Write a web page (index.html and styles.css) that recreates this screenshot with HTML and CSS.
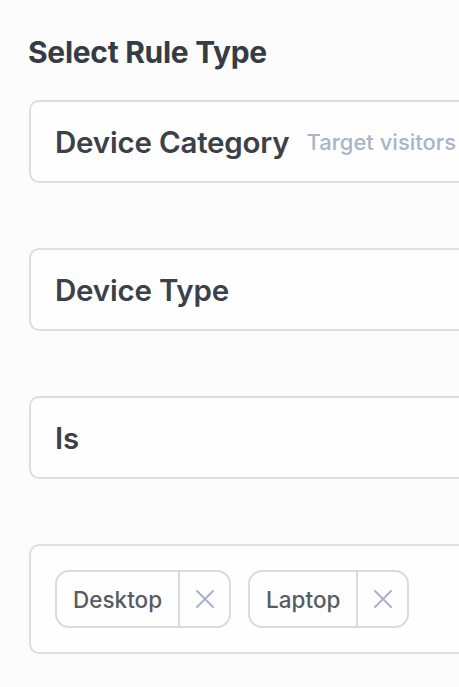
FILE: index.html
```html
<!DOCTYPE html>
<html>
<head>
<meta charset="utf-8">
<link rel="stylesheet" href="styles.css">
</head>
<body>
<div class="page">
  <h1 class="title">Select Rule Type</h1>
  <div class="field">
    <span class="label">Device Category</span>
    <span class="hint">Target visitors by device</span>
  </div>
  <div class="field">
    <span class="label">Device Type</span>
  </div>
  <div class="field">
    <span class="label">Is</span>
  </div>
  <div class="field tags">
    <div class="chip">
      <span class="chip-text">Desktop</span>
      <span class="chip-x"><svg viewBox="0 0 20 20" width="20" height="20"><path d="M2 2 L18 18 M18 2 L2 18" stroke="currentColor" stroke-width="2" fill="none" stroke-linecap="round"/></svg></span>
    </div>
    <div class="chip">
      <span class="chip-text">Laptop</span>
      <span class="chip-x"><svg viewBox="0 0 20 20" width="20" height="20"><path d="M2 2 L18 18 M18 2 L2 18" stroke="currentColor" stroke-width="2" fill="none" stroke-linecap="round"/></svg></span>
    </div>
  </div>
</div>
</body>
</html>
```
FILE: styles.css
```css
html, body {
  margin: 0;
  padding: 0;
  background: #fcfcfc;
  overflow: hidden;
}
body {
  font-family: Inter, "Noto Sans", "Liberation Sans", sans-serif;
  color: #3b4148;
}
.page {
  width: 600px;
  padding: 34px 0 0 28px;
  display: flex;
  flex-direction: column;
  gap: 65px;
}
.title {
  margin: 0 0 -35px 0;
  font-size: 30px;
  font-weight: 700;
  line-height: 36px;
  letter-spacing: -0.3px;
  color: #363c43;
}
.field {
  margin-left: 1px;
  height: 83px;
  box-sizing: border-box;
  border: 2px solid #dbdfe3;
  border-radius: 10px;
  background: #fefefe;
  display: flex;
  align-items: center;
  padding: 0 24px;
  white-space: nowrap;
  overflow: hidden;
}
.label {
  font-size: 29.5px;
  font-weight: 600;
  letter-spacing: -0.2px;
  color: #3b4148;
}
.hint {
  margin-left: 17px;
  font-size: 22px;
  font-weight: 500;
  color: #aab5c3;
}
.tags {
  height: 110px;
  gap: 17px;
}
.chip {
  height: 58px;
  box-sizing: border-box;
  border: 2px solid #d8dce1;
  border-radius: 14px;
  display: flex;
  align-items: stretch;
  background: #fefefe;
}
.chip-text {
  display: flex;
  align-items: center;
  padding: 0 16px;
  font-size: 22.5px;
  font-weight: 500;
  color: #555c64;
}
.chip-x {
  width: 49px;
  border-left: 2px solid #d8dce1;
  display: flex;
  align-items: center;
  justify-content: center;
  color: #aab2c5;
}
```
